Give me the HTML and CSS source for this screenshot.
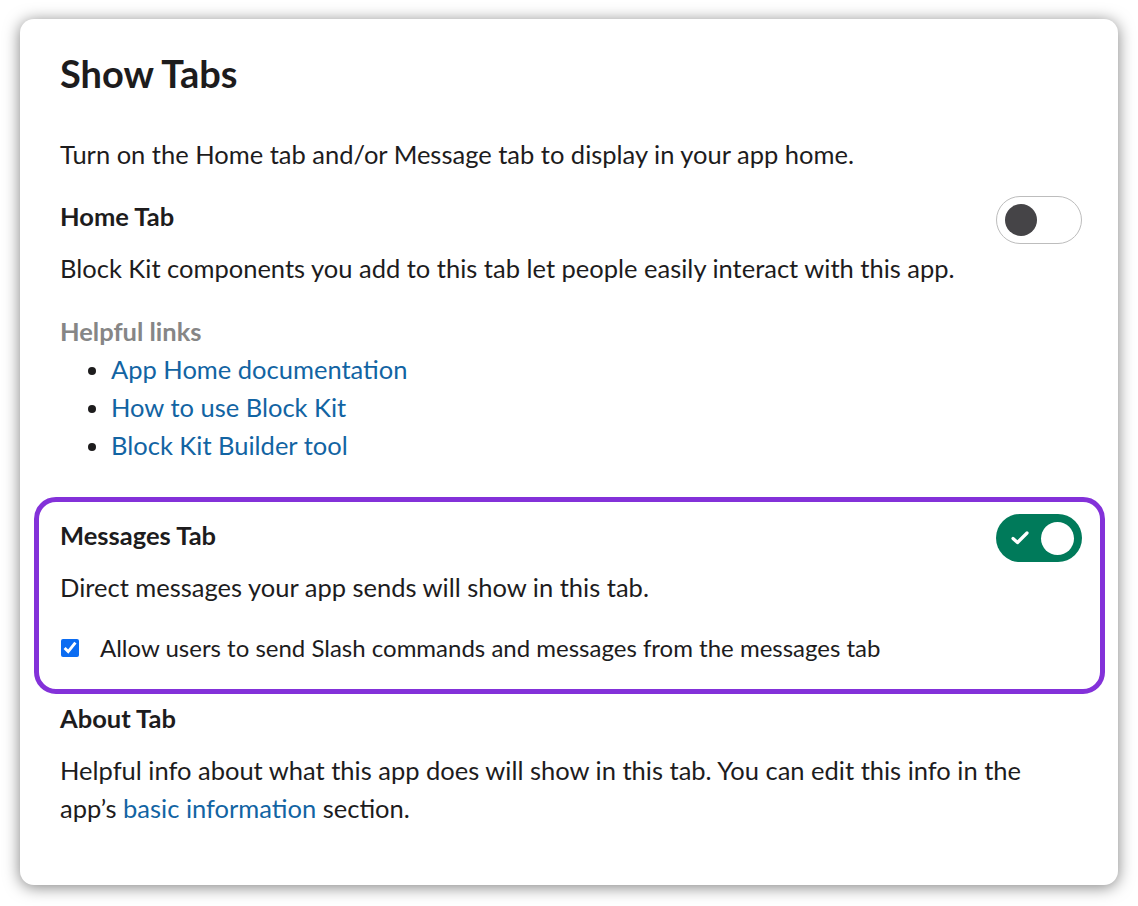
FILE: index.html
```html
<!DOCTYPE html>
<html lang="en">
<head>
<meta charset="utf-8">
<title>Show Tabs</title>
<link rel="stylesheet" href="styles.css">
</head>
<body>
<div class="card">
  <h1 class="title">Show Tabs</h1>
  <p class="intro">Turn on the Home tab and/or Message tab to display in your app home.</p>

  <section class="tab-section">
    <div class="tab-row">
      <h2 class="tab-title">Home Tab</h2>
      <span class="toggle toggle-off"><span class="knob"></span></span>
    </div>
    <p class="desc">Block Kit components you add to this tab let people easily interact with this app.</p>
    <div class="links-label">Helpful links</div>
    <ul class="links">
      <li><a href="#">App Home documentation</a></li>
      <li><a href="#">How to use Block Kit</a></li>
      <li><a href="#">Block Kit Builder tool</a></li>
    </ul>
  </section>

  <section class="tab-section highlight">
    <div class="tab-row">
      <h2 class="tab-title">Messages Tab</h2>
      <span class="toggle toggle-on">
        <svg class="check" width="20" height="16" viewBox="0 0 20 16"><path d="M3 8.5 L7.5 12.5 L17 3" fill="none" stroke="#fff" stroke-width="3.2" stroke-linecap="round" stroke-linejoin="round"/></svg>
        <span class="knob"></span>
      </span>
    </div>
    <p class="desc">Direct messages your app sends will show in this tab.</p>
    <label class="check-row"><input type="checkbox" class="cb" checked> <span>Allow users to send Slash commands and messages from the messages tab</span></label>
  </section>

  <section class="tab-section about">
    <h2 class="tab-title">About Tab</h2>
    <p class="desc about-desc">Helpful info about what this app does will show in this tab. You can edit this info in the app’s <a href="#">basic information</a> section.</p>
  </section>
</div>
</body>
</html>
```

FILE: styles.css
```css
html, body {
  margin: 0;
  padding: 0;
  background: #ffffff;
}

body {
  font-family: Lato, "Noto Sans", sans-serif;
  color: #1d1c1d;
  padding: 19px 20px 21px 20px;
}

.card {
  box-sizing: border-box;
  width: 1098px;
  height: 866px;
  background: #fff;
  border-radius: 14px;
  box-shadow: 0 2px 16px rgba(0, 0, 0, 0.5);
  padding: 30px 36px 0 40px;
}

.title {
  margin: 0;
  font-size: 38px;
  font-weight: 700;
  line-height: 48px;
  color: #1d1c1d;
}

.intro,
.desc {
  margin: 0;
  font-size: 25.5px;
  line-height: 38px;
}

.intro {
  margin-top: 38px;
}

.tab-section {
  margin-top: 23px;
}

.tab-row {
  display: flex;
  justify-content: space-between;
  align-items: flex-start;
  height: 48px;
}

.tab-title {
  margin: 0;
  padding-top: 1px;
  font-size: 25.5px;
  font-weight: 700;
  line-height: 38px;
}

.toggle {
  box-sizing: border-box;
  width: 86px;
  height: 48px;
  border-radius: 24px;
  display: flex;
  align-items: center;
  position: relative;
}

.toggle-off {
  border: 1px solid #bdbdbd;
  background: #fff;
}

.toggle-off .knob {
  width: 32px;
  height: 32px;
  border-radius: 50%;
  background: #454447;
  margin-left: 8px;
}

.toggle-on {
  background: #007a5a;
  justify-content: space-between;
  padding: 0 8px 0 14px;
}

.toggle-on .knob {
  width: 33px;
  height: 33px;
  border-radius: 50%;
  background: #fff;
}

.check {
  display: block;
}

.tab-section .desc {
  margin-top: 5px;
}

.links-label {
  margin-top: 25px;
  font-size: 25.5px;
  line-height: 38px;
  font-weight: 700;
  color: #868686;
}

.links {
  margin: 0;
  padding: 0 0 0 51px;
  font-size: 25.5px;
  line-height: 38px;
}

a {
  color: #1264a3;
  text-decoration: none;
}

.highlight {
  margin: 33px -23px 0 -26px;
  border: 5px solid #8331d9;
  border-radius: 22px;
  padding: 13px 18px 22px 21px;
}

.highlight .tab-title {
  padding-top: 1px;
}

.highlight .toggle {
  margin-top: -1px;
}

.check-row {
  margin-top: 23px;
  display: flex;
  align-items: center;
  font-size: 24px;
  line-height: 38px;
  gap: 21px;
}

.cb {
  width: 18px;
  height: 18px;
  margin: 0 0 0 1px;
  accent-color: #0b6cf2;
}

.about {
  margin-top: 4px;
}

.about .about-desc {
  margin-top: 14px;
  max-width: 990px;
}
```
